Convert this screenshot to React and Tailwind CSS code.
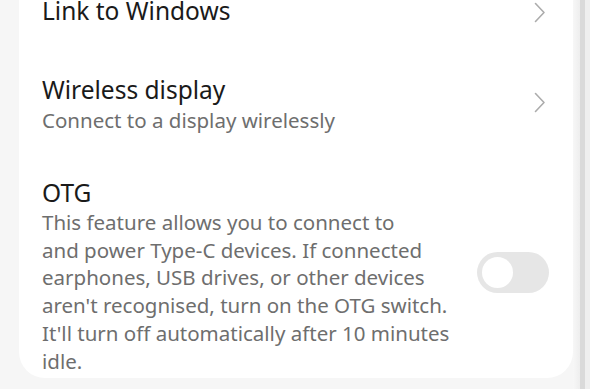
import { useState } from 'react';

function Chevron({ className = '' }) {
  return (
    <svg width="12" height="21" viewBox="0 0 12 21" fill="none" className={`shrink-0 ${className}`}>
      <path d="M1.5 1.5 L10 10.5 L1.5 19.5" stroke="#acacac" strokeWidth="1.6" strokeLinecap="round" strokeLinejoin="round" />
    </svg>
  );
}

function Toggle({ on, onChange }) {
  return (
    <button
      onClick={() => onChange(!on)}
      className="relative w-[72px] h-[41px] rounded-full bg-[#e6e6e6] shrink-0 flex items-center px-[5px]"
    >
      <span className="block w-[31px] h-[31px] rounded-full bg-white" />
    </button>
  );
}

export default function App() {
  const [otg, setOtg] = useState(false);

  return (
    <div
      className="w-[590px] h-[389px] bg-[#f6f6f6] flex overflow-hidden"
      style={{ fontFamily: '"Noto Sans", "Open Sans", sans-serif' }}
    >
      <div className="w-[19px] shrink-0" />

      {/* Settings card */}
      <div className="w-[554px] h-[378px] bg-white rounded-b-[26px] pl-[23px] pr-[27px] shrink-0">
        {/* Link to Windows */}
        <div className="-mt-[3px] flex items-start justify-between">
          <span className="text-[24.5px] leading-[28px] text-[#1a1a1a]">Link to Windows</span>
          <Chevron className="mt-[5px]" />
        </div>

        {/* Wireless display */}
        <div className="mt-[51px] flex items-start justify-between">
          <div>
            <div className="text-[24.5px] leading-[28px] text-[#1a1a1a]">Wireless display</div>
            <div className="mt-[3px] text-[20.5px] leading-[27px] text-[#6e6e6e]">Connect to a display wirelessly</div>
          </div>
          <Chevron className="mt-[16px]" />
        </div>

        {/* OTG */}
        <div className="mt-[45px] flex items-center justify-between">
          <div>
            <div className="text-[24.5px] leading-[28px] text-[#1a1a1a]">OTG</div>
            <p className="mt-[2px] text-[20.5px] leading-[27.7px] text-[#6e6e6e]">
              This feature allows you to connect to
              <br />
              and power Type-C devices. If connected
              <br />
              earphones, USB drives, or other devices
              <br />
              aren't recognised, turn on the OTG switch.
              <br />
              It'll turn off automatically after 10 minutes
              <br />
              idle.
            </p>
          </div>
          <div className="-mr-[3px] -mt-[10px]">
            <Toggle on={otg} onChange={setOtg} />
          </div>
        </div>
      </div>

      {/* Right edge of the screen frame */}
      <div className="w-[7px] shrink-0 bg-gradient-to-r from-[#f7f7f7] to-[#eeeeee]" />
      <div className="w-[5px] shrink-0 bg-[#dadada]" />
      <div className="w-[5px] shrink-0 bg-[#efefef]" />
    </div>
  );
}
